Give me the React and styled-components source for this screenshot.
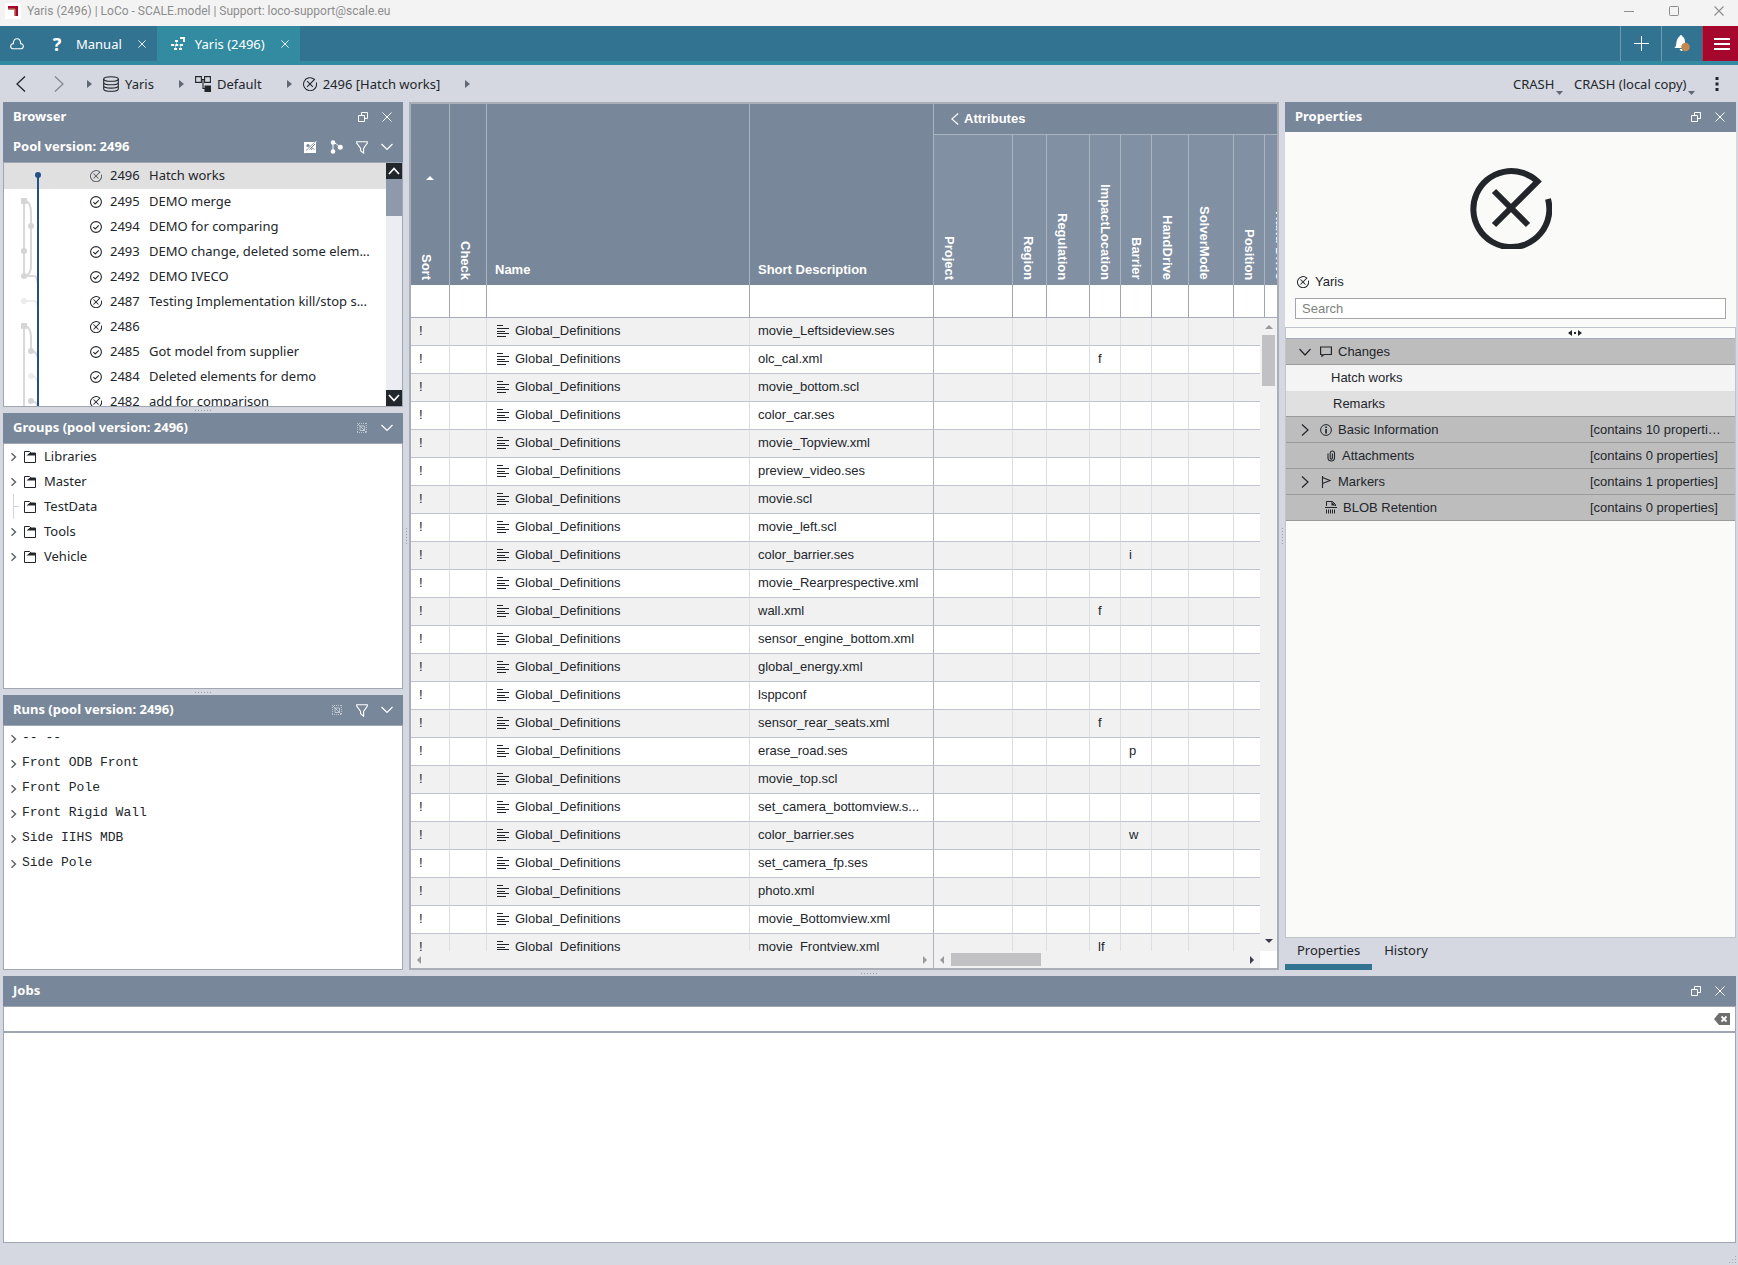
import React from "react";
import styled, { createGlobalStyle, css } from "styled-components";

const ui = `"Noto Sans", "Open Sans", sans-serif`;
const grid = `"Liberation Sans", Arial, sans-serif`;
const mono = `"Liberation Mono", "Courier New", monospace`;

const slate = "#788799";
const slateLight = "#8190a3";
const shell = "#d5d8e0";
const line = "#a0a6b2";
const ink = "#22262b";

const Global = createGlobalStyle`
  *, *::before, *::after { box-sizing: border-box; }
  body { margin: 0; background: ${shell}; }
  button, input, select { font: inherit; color: inherit; }
  button { border: 0; padding: 0; background: none; cursor: pointer; }
  svg { display: block; flex: none; }
  ul, h1, h2 { margin: 0; padding: 0; list-style: none; }
`;

/* ---------- shell ---------- */
const Shell = styled.div`
  height: 100vh;
  display: flex;
  flex-direction: column;
  background: ${shell};
  color: ${ink};
  font: 13px/18px ${ui};
`;

const TitleBar = styled.header`
  flex: none;
  height: 26px;
  padding: 0 14px 4px 5px;
  display: flex;
  align-items: center;
  gap: 6px;
  background: #f3f3f3;
  color: #8d8d8d;
`;
const WindowTitle = styled.h1`
  flex: 1;
  font: 400 12px/18px Roboto, ${ui};
`;
const WindowButtons = styled.div`
  display: flex;
  gap: 35px;
`;

const TabBar = styled.nav`
  flex: none;
  height: 39px;
  display: flex;
  background: #327391;
  border-bottom: 4px solid #338ba1;
  color: #fff;
`;
const HomeButton = styled.button`
  width: 34px;
  display: flex;
  align-items: center;
  padding-left: 10px;
`;
const Tab = styled.div`
  display: flex;
  align-items: center;
  padding: 0 11px 0 ${(p) => (p.$active ? "14px" : "16px")};
  background: ${(p) => (p.$active ? "#338ba1" : "transparent")};
`;
const TabLabel = styled.button`
  display: flex;
  align-items: center;
  gap: ${(p) => (p.$wide ? "12px" : "10px")};
  margin-right: 16px;
`;
const Question = styled.span`
  width: 14px;
  text-align: center;
  font: 700 18px/20px ${ui};
`;
const TabActions = styled.div`
  margin-left: auto;
  display: flex;
`;
const TabAction = styled.button`
  width: 41px;
  display: flex;
  align-items: center;
  justify-content: center;
  border-left: 1px solid #6f9bb1;
`;
const MenuButton = styled(TabAction)`
  width: 36px;
  padding-left: 2px;
  border-left-color: #8a4a50;
  background: #a6072d;
`;

const NavBar = styled.nav`
  flex: none;
  height: 37px;
  padding: 0 13px 0 16px;
  display: flex;
  align-items: center;
`;
const NavArrows = styled.div`
  display: flex;
  gap: 28px;
  margin-right: 23px;
`;
const Crumb = styled.a`
  display: flex;
  align-items: center;
  gap: 6px;
  padding-left: 11px;
  padding-right: 25px;
  color: inherit;
  text-decoration: none;
`;
const NavRight = styled.div`
  margin-left: auto;
  display: flex;
  align-items: center;
  gap: 11px;
`;
const Picker = styled.label`
  display: flex;
  align-items: flex-end;
  gap: 1px;
`;
const Select = styled.select`
  appearance: none;
  border: 0;
  padding: 2px 0;
  background: none;
`;
const MoreButton = styled.button`
  width: 16px;
  display: flex;
  justify-content: center;
  margin-left: 3px;
`;

/* ---------- docks ---------- */
const Workspace = styled.main`
  flex: 1;
  min-height: 0;
  padding: 0 2px 0 3px;
  display: grid;
  grid-template-columns: 400px 6px minmax(0, 1fr) 6px 451px;
`;
const LeftColumn = styled.div`
  min-height: 0;
  display: flex;
  flex-direction: column;
`;
const Splitter = styled.div`
  flex: none;
  display: flex;
  align-items: center;
  justify-content: center;
  ${(p) => (p.$vertical ? "width: 6px;" : "height: 6px;")}
  &::after {
    content: "";
    ${(p) =>
      p.$vertical
        ? css`width: 1px; height: 16px; background: repeating-linear-gradient(#9aa0ab 0 1px, transparent 1px 3px);`
        : css`width: 16px; height: 1px; background: repeating-linear-gradient(90deg, #9aa0ab 0 1px, transparent 1px 3px);`}
  }
`;
const Dock = styled.section`
  display: flex;
  flex-direction: column;
  min-height: 0;
  flex: ${(p) => (p.$height ? `0 0 ${p.$height}px` : "1 1 0")};
`;
const DockHeader = styled.header`
  flex: none;
  height: 30px;
  padding: 0 10px;
  display: flex;
  align-items: center;
  justify-content: space-between;
  background: ${slate};
  color: #fff;
`;
const DockTitle = styled.h2`
  font: 700 13px/18px ${ui};
  padding-bottom: 2px;
`;
const Tools = styled.div`
  display: flex;
  gap: ${(p) => (p.$tight ? "12px" : "13px")};
`;
const DockBody = styled.div`
  flex: 1;
  min-height: 0;
  overflow: hidden;
  position: relative;
  display: flex;
  border: 1px solid ${line};
  background: #fff;
`;
const List = styled.ul`
  flex: 1;
  min-width: 0;
  font-family: ${(p) => (p.$mono ? mono : "inherit")};
`;

const GraphOverlay = styled.svg`
  position: absolute;
  left: 0;
  top: 0;
`;
const VersionRow = styled.li`
  height: 25px;
  display: flex;
  align-items: center;
  padding-left: 86px;
  white-space: nowrap;
  background: ${(p) => (p.$selected ? "#e0e0e0" : "transparent")};
  &:first-child { height: 26px; }
`;
const VersionNumber = styled.span`
  width: 39px;
  margin-left: 8px;
  padding-bottom: 2px;
`;
const VersionText = styled.span`
  padding-bottom: 2px;
`;
const VScroll = styled.div`
  width: 16px;
  display: flex;
  flex-direction: column;
  background: #ecedf2;
`;
const ScrollButton = styled.button`
  height: 16px;
  display: flex;
  align-items: center;
  justify-content: center;
  background: #22262d;
  color: #fff;
`;
const ScrollThumb = styled.div`
  height: 37px;
  margin-bottom: auto;
  background: #8e9aac;
`;

const TreeRow = styled.li`
  height: 25px;
  display: flex;
  align-items: center;
  padding-left: 6px;
  white-space: pre;
`;
const TreeLabel = styled.span`
  margin-left: ${(p) => (p.$near ? "4px" : "8px")};
  padding-bottom: 2px;
`;

/* ---------- table ---------- */
const TableFrame = styled.section`
  min-height: 0;
  display: flex;
  flex-direction: column;
  border: 2px solid #aaaeb6;
  background: #fff;
  overflow: hidden;
  font-family: ${grid};
`;
const Clip = styled.div`
  flex: ${(p) => (p.$grow ? "1 1 0" : "none")};
  min-width: 0;
  min-height: 0;
  overflow: hidden;
`;
const Table = styled.table`
  width: 964px;
  table-layout: fixed;
  border-collapse: separate;
  border-spacing: 0;
  font-size: 13px;
  line-height: 16px;
`;
const HeadCell = styled.th`
  height: ${(p) => p.$height}px;
  padding: 0 0 5px 8px;
  vertical-align: bottom;
  text-align: left;
  font-weight: 700;
  color: #fff;
  background: ${(p) => (p.$sub ? slateLight : slate)};
  border-right: 1px solid #aab3c0;
`;
const GroupCell = styled(HeadCell)`
  padding: 0 0 0 17px;
  vertical-align: middle;
  border-bottom: 1px solid #aab3c0;
`;
const GroupLabel = styled.button`
  display: flex;
  align-items: center;
  gap: 5px;
  font-weight: 700;
`;
const Turned = styled.span`
  display: block;
  writing-mode: vertical-rl;
  margin-left: -1px;
  white-space: nowrap;
`;
const SortLabel = styled.div`
  height: 105px;
  display: flex;
  flex-direction: column;
  align-items: flex-start;
  justify-content: space-between;
`;
const SortMark = styled.div`
  padding: 1px 0 0 7px;
`;
const NameLabel = styled.div`
  padding-bottom: 2px;
`;
const FilterCell = styled.td`
  height: 33px;
  padding: 0;
  border-right: 1px solid ${line};
  border-bottom: 1px solid #a4abbc;
`;
const FilterInput = styled.input`
  display: block;
  width: 100%;
  height: 30px;
  border: 0;
  padding: 0 8px;
  background: none;
  outline: none;
`;
const BodyRow = styled.tr`
  background: #fff;
  &:nth-child(odd) { background: #f1f1f1; }
`;
const Cell = styled.td`
  height: 28px;
  padding: 0 0 1px 8px;
  white-space: nowrap;
  overflow: hidden;
  border-bottom: 1px solid #bfc4d0;
  border-right: 1px solid ${(p) => (p.$frozen ? "#aeb4bd" : "#dcdee3")};
`;
const NameCell = styled.div`
  display: flex;
  align-items: center;
  gap: 6px;
  padding-left: 2px;
`;
const BodyArea = styled.div`
  flex: 1;
  min-height: 0;
  display: flex;
`;
const TableVScroll = styled.div`
  width: 17px;
  padding: 7px 2px 8px;
  display: flex;
  flex-direction: column;
  align-items: center;
  background: #f1f1f1;
`;
const TableVThumb = styled.div`
  width: 13px;
  height: 51px;
  margin: 6px 0 auto;
  background: #c1c1c3;
`;
const HScrollRow = styled.div`
  flex: none;
  height: 17px;
  display: flex;
`;
const HScroll = styled.div`
  flex: ${(p) => (p.$width ? `0 0 ${p.$width}px` : "1")};
  display: flex;
  align-items: center;
  padding: 0 6px;
  background: #f1f1f1;
  border-right: ${(p) => (p.$width ? "1px solid #aeb4bd" : "0")};
`;
const HThumb = styled.div`
  width: 90px;
  height: 13px;
  margin-left: 7px;
  background: #c1c1c3;
`;
const Push = styled.div`
  flex: 1;
`;
const Corner = styled.div`
  width: 17px;
  background: #fff;
`;

/* ---------- properties ---------- */
const Summary = styled.div`
  flex: none;
  height: 195px;
  padding: 35px 10px 8px;
  display: flex;
  flex-direction: column;
  background: #fafaf8;
  font-family: ${grid};
`;
const BigState = styled.div`
  display: flex;
  justify-content: center;
`;
const ObjectName = styled.div`
  display: flex;
  align-items: center;
  gap: 6px;
  margin: auto 0 8px 2px;
  line-height: 16px;
`;
const SearchInput = styled.input`
  height: 21px;
  padding: 0 6px;
  border: 1px solid #a6a6a6;
  border-radius: 0;
  background: #fff;
  &::placeholder { color: #7d827d; opacity: 1; }
`;
const PropBody = styled.div`
  flex: 1;
  min-height: 0;
  border: 1px solid #bfc3cc;
  background: #fafaf9;
  font-family: ${grid};
`;
const Handle = styled.div`
  height: 11px;
  padding-left: 128px;
  display: flex;
  align-items: center;
  justify-content: center;
  border-bottom: 1px solid #a4abbc;
`;
const PropRow = styled.li`
  height: 26px;
  display: flex;
  align-items: center;
  padding-left: ${(p) => p.$indent}px;
  background: ${(p) => p.$tone};
  border-bottom: 1px solid ${(p) => (p.$ruled ? "#9b9b9b" : "transparent")};
`;
const PropLabel = styled.span`
  display: flex;
  align-items: center;
  gap: 6px;
  flex: 1;
`;
const Twisty = styled.button`
  width: 21px;
`;
const PropValue = styled.span`
  width: 145px;
  white-space: nowrap;
`;
const PropTabs = styled.div`
  flex: none;
  height: 32px;
  display: flex;
`;
const PropTab = styled.button`
  padding: 0 12px 2px;
  border-bottom: 6px solid ${(p) => (p.$active ? "#327391" : "transparent")};
`;

/* ---------- jobs ---------- */
const JobsArea = styled.div`
  flex: none;
  padding: 0 2px 0 3px;
  display: flex;
  flex-direction: column;
  height: 267px;
`;
const JobsFilter = styled.div`
  flex: none;
  height: 27px;
  display: flex;
  align-items: center;
  padding: 0 5px 1px 0;
  background: #fff;
  border: 1px solid ${line};
  border-bottom-width: 2px;
`;
const JobsInput = styled.input`
  flex: 1;
  height: 22px;
  padding: 0 6px;
  border: 0;
  outline: none;
  background: none;
`;
const JobsBody = styled.div`
  flex: 1;
  background: #fff;
  border: 1px solid ${line};
  border-top: 0;
`;
const StatusBar = styled.footer`
  flex: none;
  height: 22px;
  padding: 0 1px 1px 0;
  display: flex;
  justify-content: flex-end;
  align-items: flex-end;
`;

/* ---------- icons ---------- */
const Svg = ({ w = 12, h = w, box, sw = 1, fill = "none", children, ...rest }) => (
  <svg width={w} height={h} viewBox={box || `0 0 ${w} ${h}`} fill={fill} stroke="currentColor" strokeWidth={sw} aria-hidden="true" {...rest}>
    {children}
  </svg>
);
const CloseIcon = ({ size = 10 }) => (
  <Svg w={size} box="0 0 10 10" sw={1.1}><path d="M.5.5l9 9M9.500.5l-9 9" /></Svg>
);
const RestoreIcon = () => (
  <Svg w={12}><path d="M1.500 4.500h6v6h-6zM4.500 4V1.500h6v6H8" /></Svg>
);
const ChevronDown = ({ w = 12 }) => (
  <Svg w={w} h={12} box="0 0 12 12" sw={1.2}><path d="M.5 3L6 8.500 11.500 3" /></Svg>
);
const FunnelIcon = () => (
  <Svg w={12} h={13} sw={1.1}><path d="M.7.8h10.600v1.200L7.600 7.500v4.700L4.600 9.800V7.500L.7 2z" /></Svg>
);
const ImageIcon = () => (
  <Svg w={13} h={13} stroke="none">
    <path d="M0 1h12v11H0z" fill="currentColor" />
    <circle cx="4" cy="4.500" r="1.600" fill={slate} />
    <path d="M5.500 8.500L11 3M7 9l1.500-2 2 1.500" stroke={slate} />
    <path d="M0 12.500L12.500 0" stroke="#fff" strokeWidth=".8" />
    <path d="M2 9.500L10.500 1.500" stroke={slate} strokeWidth=".8" />
  </Svg>
);
const BranchIcon = () => (
  <Svg w={13} h={14}>
    <path d="M3 3v9M3 3.500h3l3.500 3.500" />
    <g fill="currentColor" stroke="none">
      <circle cx="3" cy="2.500" r="2.300" /><circle cx="3" cy="11.500" r="2.300" /><circle cx="10.300" cy="7.300" r="2.500" />
    </g>
  </Svg>
);
const SelectionIcon = () => (
  <Svg w={12} color="#bcc5cf">
    <path d="M1.500 1v10M10.500 1v10M1 1.500h10M1 10.500h10" strokeDasharray="1 1" />
    <path d="M4 4h4.500v4.500H4zM1.500 1.500l9 9" />
  </Svg>
);
const StateKilled = ({ size = 12, color = ink, sw = 7 }) => (
  <Svg w={size} box="0 0 82 82" sw={sw} color={color}>
    <path d="M24 58L67.500 14.500A38 38 0 1 0 78 32M24 24L58 58" />
  </Svg>
);
const StateChecked = () => (
  <Svg w={12} sw={1.1} color={ink}><circle cx="6" cy="6" r="5.400" /><path d="M3.300 6.200l1.900 1.800L8.800 4.400" /></Svg>
);
const FolderIcon = () => (
  <Svg w={12}>
    <path d="M.5 11.500V.5h5l1.500 1.500h4.500v9.500z" />
    <path d="M1 4.500h1.500L5.500 2H12v2.500H1z" fill="currentColor" stroke="none" />
    <path d="M1 1h4l-2.500 3H1z" fill="#fff" stroke="none" />
  </Svg>
);
const LinesIcon = () => (
  <Svg w={12} h={12} shapeRendering="crispEdges">
    <path d="M0 .5h6M0 3.500h12M0 6.500h8M0 8.500h12M0 11.500h9" />
  </Svg>
);
const Tri = ({ dir, color = "#5f6873", w = 5, h = 8 }) => {
  const d = {
    right: `M0 0L${w} ${h / 2} 0 ${h}z`,
    left: `M${w} 0L0 ${h / 2} ${w} ${h}z`,
    up: `M0 ${h}L${w / 2} 0 ${w} ${h}z`,
    down: `M0 0L${w / 2} ${h} ${w} 0z`,
  }[dir];
  return <Svg w={w} h={h} fill={color} stroke="none"><path d={d} /></Svg>;
};
const TreeArrow = ({ w }) => (
  <Svg w={w} h={10} sw={1.4} color="#5a6068"><path d="M1.500 1.200L5.500 5l-4 3.800" /></Svg>
);
const CommentIcon = () => <Svg w={12} h={11} sw={1.2}><path d="M.6 1h10.800v7.500H4L2 10.200V8.500H.6z" /></Svg>;
const InfoIcon = () => (
  <Svg w={12} sw={1}>
    <circle cx="6" cy="6" r="5.400" />
    <path d="M5.200 2.400h1.700v1.500H5.200zM5.200 4.900h1.700v4.600H5.200z" fill="currentColor" stroke="none" />
  </Svg>
);
const ClipIcon = () => (
  <Svg w={9} h={12} sw={1.1}><path d="M1 3.500v5a3.300 3 0 0 0 6.500 0V2.800a2.200 2.200 0 0 0-4.300 0V8a1 1 0 0 0 2.200 0V3.500" /></Svg>
);
const FlagIcon = () => <Svg w={12} sw={1.1}><path d="M2.500 0v12M2.500 1.500L10 4.500 2.500 7.500" /></Svg>;
const ShredIcon = () => (
  <Svg w={12} h={13} sw={1}>
    <path d="M1.500 5V.5h6L10.500 3.500V5M0 6.500h12" />
    <path d="M1.500 8.500v4M3.500 8.500v4M5.500 8.500v4M7.500 8.500v4M9.500 8.500v4" />
    <path d="M6.500.5L10.500 4.500h-4z" fill="currentColor" stroke="none" />
  </Svg>
);

/* ---------- data ---------- */
const versions = [
  [2496, "Hatch works", 0], [2495, "DEMO merge", 1], [2494, "DEMO for comparing", 1],
  [2493, "DEMO change, deleted some elem...", 1], [2492, "DEMO IVECO", 1],
  [2487, "Testing Implementation kill/stop s...", 0], [2486, "", 0],
  [2485, "Got model from supplier", 1], [2484, "Deleted elements for demo", 1], [2482, "add for comparison", 0],
];
const groups = ["Libraries", "Master", "TestData", "Tools", "Vehicle"];
const runs = ["-- --", "Front ODB Front", "Front Pole", "Front Rigid Wall", "Side IIHS MDB", "Side Pole"];
const attributes = ["Project", "Region", "Regulation", "ImpactLocation", "Barrier", "HandDrive", "SolverMode", "Position", "Hand Drive"];
const columnWidths = [39, 37, 263, 184, 79, 34, 43, 31, 31, 37, 45, 31, 110];
const rows = [
  ["movie_Leftsideview.ses"], ["olc_cal.xml", 3, "f"], ["movie_bottom.scl"], ["color_car.ses"], ["movie_Topview.xml"],
  ["preview_video.ses"], ["movie.scl"], ["movie_left.scl"], ["color_barrier.ses", 4, "i"], ["movie_Rearprespective.xml"],
  ["wall.xml", 3, "f"], ["sensor_engine_bottom.xml"], ["global_energy.xml"], ["lsppconf"], ["sensor_rear_seats.xml", 3, "f"],
  ["erase_road.ses", 4, "p"], ["movie_top.scl"], ["set_camera_bottomview.s..."], ["color_barrier.ses", 4, "w"],
  ["set_camera_fp.ses"], ["photo.xml"], ["movie_Bottomview.xml"], ["movie_Frontview.xml", 3, "lf"],
];

const sectionTone = "#bdbdbd";
const properties = [
  { label: "Changes", Icon: CommentIcon, open: true, indent: 13, tone: sectionTone, ruled: true },
  { label: "Hatch works", indent: 45, tone: "#f4f4f4" },
  { label: "Remarks", indent: 47, tone: "#e0e0e0", ruled: true },
  { label: "Basic Information", Icon: InfoIcon, open: false, indent: 13, tone: sectionTone, ruled: true, value: "[contains 10 properti…" },
  { label: "Attachments", Icon: ClipIcon, indent: 41, tone: sectionTone, ruled: true, value: "[contains 0 properties]" },
  { label: "Markers", Icon: FlagIcon, open: false, indent: 13, tone: sectionTone, ruled: true, value: "[contains 1 properties]" },
  { label: "BLOB Retention", Icon: ShredIcon, indent: 39, tone: sectionTone, ruled: true, value: "[contains 0 properties]" },
];

const Columns = () => (
  <colgroup>{columnWidths.map((w, i) => <col key={i} width={w} />)}</colgroup>
);

const DockButtons = () => (
  <Tools $tight>
    <button aria-label="Float panel"><RestoreIcon /></button>
    <button aria-label="Close panel"><Svg w={12}><path d="M1.500 1.500l9 9M10.500 1.500l-9 9" /></Svg></button>
  </Tools>
);

const Graph = () => (
  <GraphOverlay width="40" height="244" viewBox="0 0 40 244" fill="none" aria-hidden="true">
    <g stroke="#d9d9d9" strokeWidth="2">
      <path d="M20 38V113M20 38q7 0 7 12V102q0 11-7 11h10q3 0 4 8M20 163V244M20 163q7 0 7 12v13q6 0 7 8M27 238q6 0 7 6" />
      <path d="M20 138h10q3 0 4 7M27 213q6 0 7 7" stroke="#ededed" />
    </g>
    <g fill="#d5d5d5">
      <rect x="17" y="35" width="6" height="6" rx="1" /><circle cx="27" cy="63" r="3" /><circle cx="20" cy="88" r="3" />
      <circle cx="20" cy="113" r="3" /><rect x="17" y="160" width="6" height="6" rx="1" /><circle cx="27" cy="188" r="3" />
      <circle cx="27" cy="238" r="3" /><circle cx="20" cy="138" r="3" fill="#ececec" /><circle cx="27" cy="213" r="3" fill="#ececec" />
    </g>
    <path d="M34 12V244" stroke="#24508a" strokeWidth="2" />
    <circle cx="34" cy="12" r="3" fill="#24508a" />
  </GraphOverlay>
);

export default function App() {
  return (
    <>
      <Global />
      <Shell>
        <TitleBar>
          <Svg w={16} stroke="none">
            <path d="M0 0h16v16H0z" fill="#fff" />
            <path d="M3 3h10v10H9.500V6.500H3z" fill="#a6072d" />
            <path d="M3 6h7v7" stroke="#b98a5a" strokeWidth="1" />
          </Svg>
          <WindowTitle>Yaris (2496) | LoCo - SCALE.model | Support: loco-support@scale.eu</WindowTitle>
          <WindowButtons>
            <button aria-label="Minimize"><Svg w={10}><path d="M0 5.500h10" /></Svg></button>
            <button aria-label="Maximize"><Svg w={10}><rect x=".5" y=".5" width="9" height="9" rx="1" /></Svg></button>
            <button aria-label="Close window"><CloseIcon /></button>
          </WindowButtons>
        </TitleBar>

        <TabBar>
          <HomeButton aria-label="Cloud">
            <Svg w={14} h={12} sw={1.1}><path d="M3.300 10.800a2.600 2.600 0 0 1 0-5.200C3.500 2.500 5 .8 7 .8s3.500 1.700 3.700 4.800a2.600 2.600 0 0 1 0 5.200z" /></Svg>
          </HomeButton>
          <Tab>
            <TabLabel $wide><Question>?</Question>Manual</TabLabel>
            <button aria-label="Close Manual"><CloseIcon size={8} /></button>
          </Tab>
          <Tab $active>
            <TabLabel>
              <Svg w={14} fill="currentColor" stroke="none">
                <path d="M9 0h5v5h-2V2H9zM4 3h3v2H4zM0 7h3v2H0zM4.500 7h2.500v2H4.500zM9 7h3v2H9zM3 11h3v2H3zM8 11h3v2H8z" />
                <path d="M5.500 4v4M2 8h8M4.500 8v4M9.500 8v4" stroke="currentColor" strokeWidth=".5" />
              </Svg>
              Yaris (2496)
            </TabLabel>
            <button aria-label="Close Yaris"><CloseIcon size={8} /></button>
          </Tab>
          <TabActions>
            <TabAction aria-label="New tab"><Svg w={15}><path d="M7.500 0v15M0 7.500h15" /></Svg></TabAction>
            <TabAction aria-label="Notifications">
              <Svg w={16} h={17} stroke="none">
                <path d="M7 0q1.300.3 1.300 1.300Q11 3 11 7v4l1.500 2H.5L2 10.500Q2.500 3 5.700 1.300 5.700.3 7 0zM5.500 14h3v2q-2 .5-3-2z" fill="#fff" />
                <circle cx="11.500" cy="12" r="4.300" fill="#c4874d" />
              </Svg>
            </TabAction>
            <MenuButton aria-label="Menu"><Svg w={16} h={12} sw={2}><path d="M0 1h16M0 6h16M0 11h16" /></Svg></MenuButton>
          </TabActions>
        </TabBar>

        <NavBar>
          <NavArrows>
            <button aria-label="Back"><Svg w={10} h={16} sw={1.3}><path d="M9 .5L1 8l8 7.500" /></Svg></button>
            <button aria-label="Forward"><Svg w={10} h={16} sw={1.2} color="#80868a"><path d="M1 .5L9 8l-8 7.500" /></Svg></button>
          </NavArrows>
          <Tri dir="right" />
          <Crumb href="#yaris">
            <Svg w={16} sw={1.1}>
              <ellipse cx="8" cy="3" rx="7.300" ry="2.300" />
              <path d="M.7 3v10c0 1.300 3.300 2.300 7.300 2.300s7.300-1 7.300-2.300V3M.7 6.500C.7 7.800 4 8.800 8 8.800s7.300-1 7.300-2.300M.7 9.800c0 1.300 3.300 2.300 7.300 2.300s7.300-1 7.300-2.300" />
            </Svg>
            Yaris
          </Crumb>
          <Tri dir="right" />
          <Crumb href="#default">
            <Svg w={16} sw={1.1}>
              <path d="M.6.6h5.800v5.800H.6zM9.600.6h5.800v5.800H9.600zM6.400 3.500h3.200M8 3.500v9h2" />
              <path d="M9.500 9.500H16V16H9.500z" fill="currentColor" stroke="none" />
            </Svg>
            Default
          </Crumb>
          <Tri dir="right" />
          <Crumb href="#2496"><StateKilled size={14} sw={6} />2496 [Hatch works]</Crumb>
          <Tri dir="right" />
          <NavRight>
            <Picker><Select aria-label="Discipline"><option>CRASH</option></Select><Tri dir="down" w={7} h={4} /></Picker>
            <Picker><Select aria-label="Copy"><option>CRASH (local copy)</option></Select><Tri dir="down" w={7} h={4} /></Picker>
            <MoreButton aria-label="More">
              <Svg w={4} h={14} fill="currentColor" stroke="none"><path d="M.5 0h3v3h-3zM.5 5.500h3v3h-3zM.5 11h3v3h-3z" /></Svg>
            </MoreButton>
          </NavRight>
        </NavBar>

        <Workspace>
          <LeftColumn>
            <Dock $height={305}>
              <DockHeader><DockTitle>Browser</DockTitle><DockButtons /></DockHeader>
              <DockHeader>
                <DockTitle>Pool version: 2496</DockTitle>
                <Tools>
                  <button aria-label="Preview"><ImageIcon /></button>
                  <button aria-label="Branches"><BranchIcon /></button>
                  <button aria-label="Filter"><FunnelIcon /></button>
                  <button aria-label="Collapse"><ChevronDown /></button>
                </Tools>
              </DockHeader>
              <DockBody>
                <List>
                  {versions.map(([id, text, ok], i) => (
                    <VersionRow key={id} $selected={i === 0}>
                      {ok ? <StateChecked /> : <StateKilled color={i === 0 ? "#5c6166" : ink} />}
                      <VersionNumber>{id}</VersionNumber>
                      <VersionText>{text}</VersionText>
                    </VersionRow>
                  ))}
                </List>
                <VScroll>
                  <ScrollButton aria-label="Scroll up"><Svg w={12} h={8} sw={1.7}><path d="M1 7l5-5.500L11 7" /></Svg></ScrollButton>
                  <ScrollThumb />
                  <ScrollButton aria-label="Scroll down"><Svg w={12} h={8} sw={1.7}><path d="M1 1l5 5.500L11 1" /></Svg></ScrollButton>
                </VScroll>
                <Graph />
              </DockBody>
            </Dock>
            <Splitter />
            <Dock $height={276}>
              <DockHeader>
                <DockTitle>Groups (pool version: 2496)</DockTitle>
                <Tools>
                  <button aria-label="Select"><SelectionIcon /></button>
                  <button aria-label="Collapse"><ChevronDown /></button>
                </Tools>
              </DockHeader>
              <DockBody>
                <List>
                  {groups.map((g) => (
                    <TreeRow key={g}>
                      {g === "TestData" ? (
                        <Svg w={14} h={25} color="#d2d4d8" shapeRendering="crispEdges"><path d="M3.500 0v25M3.500 12.500H9" /></Svg>
                      ) : (
                        <TreeArrow w={14} />
                      )}
                      <FolderIcon />
                      <TreeLabel>{g}</TreeLabel>
                    </TreeRow>
                  ))}
                </List>
              </DockBody>
            </Dock>
            <Splitter />
            <Dock>
              <DockHeader>
                <DockTitle>Runs (pool version: 2496)</DockTitle>
                <Tools>
                  <button aria-label="Select"><SelectionIcon /></button>
                  <button aria-label="Filter"><FunnelIcon /></button>
                  <button aria-label="Collapse"><ChevronDown /></button>
                </Tools>
              </DockHeader>
              <DockBody>
                <List $mono>
                  {runs.map((r) => (
                    <TreeRow key={r}>
                      <TreeArrow w={8} />
                      <TreeLabel $near>{r}</TreeLabel>
                    </TreeRow>
                  ))}
                </List>
              </DockBody>
            </Dock>
          </LeftColumn>

          <Splitter $vertical />

          <TableFrame>
            <Clip>
              <Table>
                <Columns />
                <thead>
                  <tr>
                    <HeadCell rowSpan={2} $height={181}>
                      <SortLabel>
                        <SortMark><Tri dir="up" color="#fff" w={8} h={4} /></SortMark>
                        <Turned>Sort</Turned>
                      </SortLabel>
                    </HeadCell>
                    <HeadCell rowSpan={2} $height={181}><Turned>Check</Turned></HeadCell>
                    <HeadCell rowSpan={2} $height={181}><NameLabel>Name</NameLabel></HeadCell>
                    <HeadCell rowSpan={2} $height={181}><NameLabel>Short Description</NameLabel></HeadCell>
                    <GroupCell colSpan={9} $height={31}>
                      <GroupLabel><Svg w={8} h={12} sw={1.1}><path d="M7.200.5L.8 6l6.400 5.500" /></Svg>Attributes</GroupLabel>
                    </GroupCell>
                  </tr>
                  <tr>
                    {attributes.map((a) => <HeadCell key={a} $sub $height={150}><Turned>{a}</Turned></HeadCell>)}
                  </tr>
                </thead>
                <tbody>
                  <tr>
                    {columnWidths.map((_, i) => (
                      <FilterCell key={i}><FilterInput aria-label={`Filter column ${i + 1}`} /></FilterCell>
                    ))}
                  </tr>
                </tbody>
              </Table>
            </Clip>
            <BodyArea>
              <Clip $grow>
                <Table>
                  <Columns />
                  <tbody>
                    {rows.map(([desc, at, mark], i) => (
                      <BodyRow key={i}>
                        <Cell>!</Cell>
                        <Cell />
                        <Cell><NameCell><LinesIcon />Global_Definitions</NameCell></Cell>
                        <Cell $frozen>{desc}</Cell>
                        {attributes.map((a, c) => <Cell key={a}>{c === at ? mark : null}</Cell>)}
                      </BodyRow>
                    ))}
                  </tbody>
                </Table>
              </Clip>
              <TableVScroll>
                <Tri dir="up" w={8} h={4} color="#9a9a9c" />
                <TableVThumb />
                <Tri dir="down" w={8} h={4} color="#3f3a48" />
              </TableVScroll>
            </BodyArea>
            <HScrollRow>
              <HScroll $width={523}>
                <Tri dir="left" w={4} color="#9a9a9c" /><Push /><Tri dir="right" w={4} color="#9a9a9c" />
              </HScroll>
              <HScroll>
                <Tri dir="left" w={4} color="#9a9a9c" /><HThumb /><Push /><Tri dir="right" w={4} color="#3f3a48" />
              </HScroll>
              <Corner />
            </HScrollRow>
          </TableFrame>

          <Splitter $vertical />

          <Dock>
            <DockHeader><DockTitle>Properties</DockTitle><DockButtons /></DockHeader>
            <Summary>
              <BigState><StateKilled size={82} sw={6} /></BigState>
              <ObjectName><StateKilled />Yaris</ObjectName>
              <SearchInput aria-label="Search properties" placeholder="Search" />
            </Summary>
            <PropBody>
              <Handle>
                <Svg w={14} h={6} fill={ink} stroke="none"><path d="M4 0v6L0 3zM6 2h2v2H6zM10 0l4 3-4 3z" /></Svg>
              </Handle>
              <List>
                {properties.map(({ label, Icon, open, indent, tone, ruled, value }) => (
                  <PropRow key={label} $indent={indent} $tone={tone} $ruled={ruled}>
                    {open !== undefined && (
                      <Twisty aria-label={`Toggle ${label}`}>
                        <Svg w={12} sw={1.2}><path d={open ? "M.5 3L6 9l5.500-6" : "M3 .5L9 6l-6 5.500"} /></Svg>
                      </Twisty>
                    )}
                    <PropLabel>{Icon && <Icon />}{label}</PropLabel>
                    {value && <PropValue>{value}</PropValue>}
                  </PropRow>
                ))}
              </List>
            </PropBody>
            <PropTabs>
              <PropTab $active>Properties</PropTab>
              <PropTab>History</PropTab>
            </PropTabs>
          </Dock>
        </Workspace>

        <Splitter />

        <JobsArea>
          <DockHeader><DockTitle>Jobs</DockTitle><DockButtons /></DockHeader>
          <JobsFilter>
            <JobsInput aria-label="Filter jobs" />
            <button aria-label="Clear filter">
              <Svg w={16} h={12} stroke="none">
                <path d="M5 0h11v12H5L0 6z" fill="#6e6e6e" />
                <path d="M7.500 3.500l5 5M12.500 3.500l-5 5" stroke="#fff" strokeWidth="1.800" />
              </Svg>
            </button>
          </JobsFilter>
          <JobsBody />
        </JobsArea>
        <StatusBar>
          <Svg w={8} fill="#a3a9b4" stroke="none"><path d="M6 0h1v1H6zM3 3h1v1H3zM6 3h1v1H6zM0 6h1v1H0zM3 6h1v1H3zM6 6h1v1H6z" /></Svg>
        </StatusBar>
      </Shell>
    </>
  );
}
